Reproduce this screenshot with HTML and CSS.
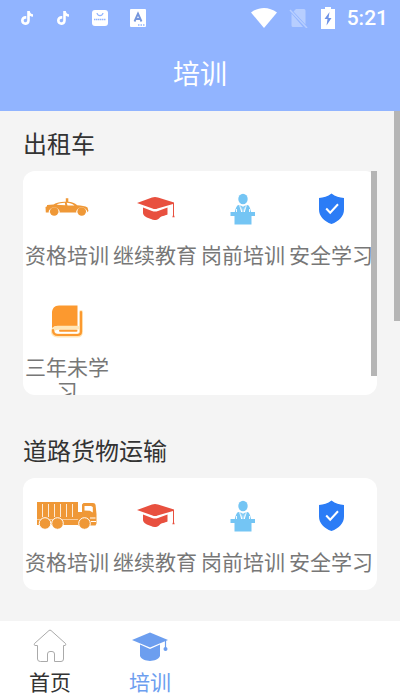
FILE: index.html
```html
<!DOCTYPE html>
<html lang="zh-CN">
<head>
<meta charset="utf-8">
<meta name="viewport" content="width=device-width, initial-scale=1">
<title>培训</title>
<link rel="stylesheet" href="styles.css">
</head>
<body>
<svg class="sprite" aria-hidden="true">
  <symbol id="note" viewBox="0 0 14 16">
    <path d="M7.200 1h2.600c.2 1.900 1.300 3 3.200 3.200v2.600c-1.200 0-2.300-.4-3.200-1v4.600c0 6-8.800 6-8.800.2 0-3 2.300-4.800 5.300-4.500v2.700c-1.500-.4-2.600.4-2.600 1.700 0 2.500 3.500 2.300 3.500-.3z"/>
  </symbol>
  <symbol id="cap" viewBox="0 0 44 44">
    <path d="M4 16 19 10.500q3-1 6 0L41 15.500v12.800l.7 2h-2.400l.7-2V17L24.500 21.500q-2.500 1-5 0z"/>
    <path d="M10 20.500 19 24q3 1 6 0l9.500-3.500v7c-3 1.500-6 1-8.500 4-2.500 2-5.500 2-8 .5C14.500 31 10 29 10 26z"/>
  </symbol>
  <symbol id="speaker" viewBox="0 0 44 44">
    <ellipse cx="22" cy="12" rx="4.700" ry="5.300"/>
    <path d="m17 18 4 1-1 6h4l-1-6 4-1c2 2 2.500 4.500 3 7h4v4h-3.500v8.500h-17V29H9.500v-4h4.300c.7-3 1.400-5.500 3.200-7z"/>
    <path d="m18.700 18.500 2 6.500M25.300 18.500l-2 6.500M15.500 22v3M28.500 22v3" fill="none" stroke="#fff" stroke-width=".9"/>
    <path d="m21 19.500h2l-.5 5.500h-1z"/>
  </symbol>
  <symbol id="shield" viewBox="0 0 44 44">
    <path d="M22.500 6.500c3.800 2.900 8 4.300 12.500 4.500v11.500c0 6.500-5 12-12.500 14.500C15 34.500 10 29 10 22.500V11c4.500-.2 8.700-1.600 12.500-4.500z"/>
    <path d="m17.200 21.500 4 4.300 7.800-8.500" fill="none" stroke="#fff" stroke-width="2"/>
  </symbol>
  <symbol id="taxi" viewBox="0 0 44 44">
    <g transform="translate(0 2) scale(1 .85)">
    <path d="M20.800 15v-4h2.500v4c3.500.2 6.300 1.800 9 4 4 .3 8 .8 10.200 2.700L43.500 26l-1.800 1.500H.8L.5 21.300l1.300-.8.300-1.700 6.400-.5c3.400-2.400 7-3.500 12.300-3.300z"/>
    <path d="M11.500 18.600c2.500-1.600 5-2.200 8.300-2.300l.5 2.900zM21.700 16.300c3.300 0 5.300 1 7.800 3l-7 .1z" fill="#fff"/>
    <path d="M3.500 28a5.700 6.500 0 0 1 11.400 0M31 28a5.700 6.500 0 0 1 11.400 0" fill="#fff"/>
    <ellipse cx="9.200" cy="26.500" rx="4.300" ry="4.900"/><ellipse cx="36.700" cy="26.500" rx="4.300" ry="4.900"/>
    </g>
  </symbol>
  <symbol id="book" viewBox="0 0 44 44">
    <path d="M14 6.500h18.500V27H12.500c-3 0-4.800 1-5.500 3V14c0-4.500 2.500-7.500 7-7.500z"/>
    <path d="M36 13v19.500c0 2.700-1 4-3.700 4H12.500c-6.200 0-6.200-7.800 0-7.800h20" fill="none" stroke="#ffe6b8" stroke-width="4" stroke-linecap="round"/>
    <path d="M36 13v19.500c0 2.700-1 3.500-3.700 3.500H13c-3.500 0-5-2-5-5" fill="none" stroke="currentColor" stroke-width="2.200" stroke-linecap="round"/>
    <path d="M15 31.700h16.500" fill="none" stroke="currentColor" stroke-width="2" stroke-linecap="round"/>
  </symbol>
  <symbol id="truck" viewBox="0 0 60 44">
    <path d="M0 8h41v17H0zM0 25.500h41v5.500H0zM41 18h4v-7.500l1.500-1.500H56c1.500 0 2.300.8 2.600 2.300L59.500 20v9.500l-1 2H41z"/>
    <path d="M5.500 10v13M11.500 10v13M17.500 10v13M23.500 10v13M29.500 10v13M35.500 10v13" stroke="#fff" stroke-width=".8"/>
    <path d="M47.500 12H54l1.800 1v5.500l-3-1.800-5.300-.2zM53 23.500h5.500v1H53zM54 27h5v1h-5z" fill="#fff"/>
    <g stroke="#fff" stroke-width="1"><circle cx="8" cy="29.500" r="5.800"/><circle cx="20.500" cy="29.500" r="5.800"/><circle cx="47.500" cy="29.500" r="5.800"/></g>
  </symbol>
</svg>

<div class="app">
  <header class="top">
    <div class="status">
      <div class="status-group notices">
        <svg width="14" height="16"><use href="#note"/></svg>
        <svg width="14" height="16"><use href="#note"/></svg>
        <svg width="16" height="16" viewBox="0 0 16 16"><rect width="16" height="16" rx="3"/><path d="M5 3c.5 3.500 5.500 3.500 6 0" fill="none" stroke="#91b4ff" stroke-width="1.200"/><path d="M2 9.500h12" stroke="#91b4ff" stroke-width="1.500" stroke-dasharray="1.500 .5"/></svg>
        <svg width="16" height="18" viewBox="0 0 16 18"><rect width="16" height="18" rx="1"/><path d="m4.500 12.500 3.500-8 3.500 8M5.500 10h5" fill="none" stroke="#7596dc" stroke-width="1.900"/><path d="M8 16h7" stroke="#91b4ff" stroke-width="1.500" stroke-dasharray="1.500 1"/></svg>
      </div>
      <div class="status-group system">
        <svg width="26" height="20" viewBox="0 0 26 20"><path d="M0 4.500C8-1.500 18-1.500 26 4.500L13 20z"/></svg>
        <svg class="sim" width="20" height="20" viewBox="0 0 20 20"><path d="M7 1h8q1.500 0 1.500 1.500V16.500L4.500 3.500zM2.500 5.500 14 19H4q-1.500 0-1.500-1.500z"/><path d="m1 2 17 18" stroke="#fff" stroke-width="1.500"/></svg>
        <svg width="14" height="22" viewBox="0 0 14 22"><path d="M4 0h6v2h4v20H0V2h4z"/><path d="M8.500 5 3.500 12h3L5.500 18.500l5-7.500h-3z" fill="#6f93e6"/></svg>
        <span class="clock">5:21</span>
      </div>
    </div>
    <h1 class="title">培训</h1>
  </header>

  <main class="content">
    <section>
      <h2 class="heading">出租车</h2>
      <div class="card-wrap">
        <div class="card two-rows">
          <a class="tile orange" href="#"><svg class="icon"><use href="#taxi"/></svg><span class="label">资格培训</span></a>
          <a class="tile red" href="#"><svg class="icon"><use href="#cap"/></svg><span class="label">继续教育</span></a>
          <a class="tile sky" href="#"><svg class="icon"><use href="#speaker"/></svg><span class="label">岗前培训</span></a>
          <a class="tile blue" href="#"><svg class="icon"><use href="#shield"/></svg><span class="label">安全学习</span></a>
          <a class="tile amber" href="#"><svg class="icon"><use href="#book"/></svg><span class="label">三年未学习</span></a>
        </div>
        <div class="bar card-bar"></div>
      </div>
    </section>
    <section>
      <h2 class="heading">道路货物运输</h2>
      <div class="card">
        <a class="tile orange" href="#"><svg class="icon wide"><use href="#truck"/></svg><span class="label">资格培训</span></a>
        <a class="tile red" href="#"><svg class="icon"><use href="#cap"/></svg><span class="label">继续教育</span></a>
        <a class="tile sky" href="#"><svg class="icon"><use href="#speaker"/></svg><span class="label">岗前培训</span></a>
        <a class="tile blue" href="#"><svg class="icon"><use href="#shield"/></svg><span class="label">安全学习</span></a>
      </div>
    </section>
    <div class="bar page-bar"></div>
  </main>

  <nav class="tabs">
    <a class="tab" href="#">
      <svg class="outline" width="36" height="36" viewBox="0 0 36 36"><path d="M5.500 17.500H3q-1.500-.5-.5-2L17 2.500q1-.8 2 0l14.500 13q1 1.500-.5 2h-1.500V31q0 2.500-2.500 2.500h-6.500V26q0-2.500-2.500-2.500h-2q-2.500 0-2.500 2.500v7.500H8.500Q5.500 33.500 5.500 31z"/></svg>
      <span>首页</span>
    </a>
    <a class="tab active" href="#" aria-current="page">
      <svg width="36" height="36" viewBox="0 0 36 36"><path d="M0 12 18 4.500 36 12 18 19.500z"/><path d="m8 16.500 10 4.500 10-4.500V28c-3 6.500-17 6.500-20 0z"/><path d="M33.500 12v8" stroke="currentColor" stroke-width="1.200"/><circle cx="33.500" cy="21" r="2"/></svg>
      <span>培训</span>
    </a>
  </nav>
</div>
</body>
</html>
```

FILE: styles.css
```css
* {
  box-sizing: border-box;
}

body {
  margin: 0;
  font-family: "Noto Sans CJK SC", sans-serif;
  color: #333;
}

a {
  color: inherit;
  text-decoration: none;
}

svg {
  display: block;
  fill: currentColor;
}

.sprite {
  position: absolute;
  width: 0;
  height: 0;
}

.app {
  display: flex;
  flex-direction: column;
  height: 100vh;
  background: #f4f4f4;
}

.top {
  background: #91b4ff;
  color: #fff;
}

.status {
  display: flex;
  justify-content: space-between;
  align-items: center;
  height: 35px;
  padding: 0 12px 0 20px;
}

.status-group {
  display: flex;
  align-items: center;
}

.notices {
  gap: 22px;
}

.system {
  gap: 12px;
}

.sim {
  opacity: 0.35;
}

.clock {
  font: 500 21px/36px Roboto, sans-serif;
}

.title {
  margin: 0;
  font-size: 27px;
  font-weight: 400;
  line-height: 76px;
  text-align: center;
}

.content {
  position: relative;
  flex: 1;
  display: flex;
  flex-direction: column;
  gap: 23px;
  padding: 0 23px;
  overflow: hidden;
}

.heading {
  margin: 0;
  height: 60px;
  font-size: 24px;
  font-weight: 400;
  line-height: 64px;
}

.card-wrap {
  position: relative;
}

.card {
  display: grid;
  grid-template-columns: repeat(4, 1fr);
  grid-auto-rows: 112px;
  padding-right: 2px;
  border-radius: 12px;
  background: #fff;
  overflow: hidden;
}

.two-rows {
  height: 224px;
}

.tile {
  display: flex;
  flex-direction: column;
  align-items: center;
  gap: 11px;
  padding: 16px 2px;
}

.icon {
  flex: none;
  width: 44px;
  height: 44px;
}

.wide {
  width: 60px;
}

.label {
  color: #777;
  font-size: 21px;
  line-height: 24px;
  text-align: center;
}

.orange {
  color: #ef9837;
}

.amber {
  color: #fc992f;
}

.red {
  color: #e8503f;
}

.sky {
  color: #74c5f4;
}

.blue {
  color: #2b7cf6;
}

.bar {
  position: absolute;
  top: 0;
  right: 0;
  width: 6px;
  background: #b5b5b5;
}

.card-bar {
  height: 205px;
}

.page-bar {
  height: 210px;
}

.tabs {
  display: grid;
  grid-template-columns: repeat(4, 1fr);
  height: 79px;
  background: #fff;
}

.tab {
  display: flex;
  flex-direction: column;
  align-items: center;
  gap: 5px;
  padding-top: 7px;
  font-size: 21px;
  line-height: 24px;
}

.outline {
  fill: none;
  stroke: #aaa;
  stroke-linejoin: round;
}

.active {
  color: #6c9eef;
}
```
